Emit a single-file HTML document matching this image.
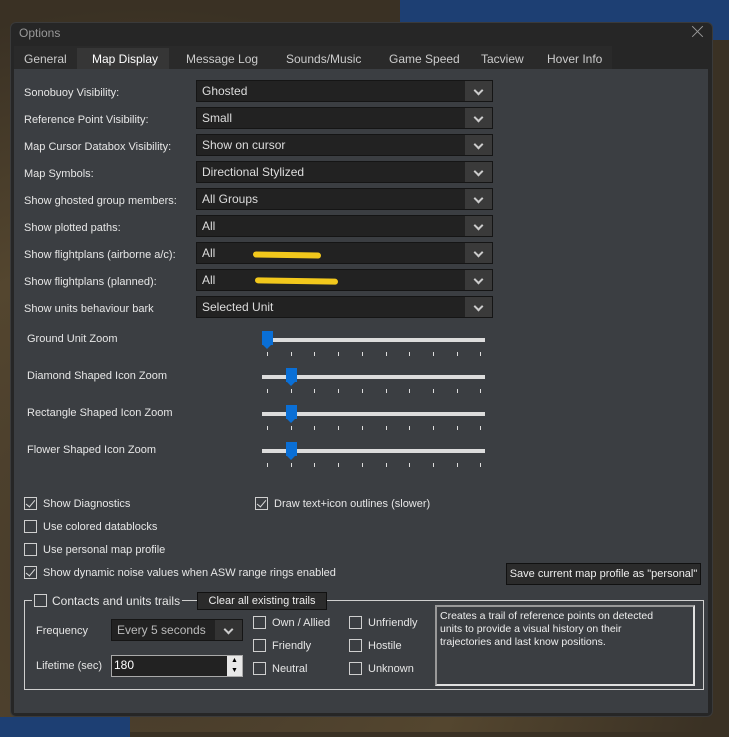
<!DOCTYPE html>
<html><head><style>
*{box-sizing:border-box;margin:0;padding:0}
body{width:729px;height:732px;position:relative;overflow:hidden;font-family:"Liberation Sans",sans-serif;font-size:11px;color:#e6e6e6;
background:radial-gradient(ellipse at 20% 80%,#44392a,#54462f 40%,#3a3124 70%);}
.a{position:absolute;white-space:nowrap}
.sea{position:absolute;left:400px;top:0;width:340px;height:40px;background:#1d3f73}
.sea2{position:absolute;left:0;top:717px;width:130px;height:20px;background:#1d3f73}
.win{position:absolute;left:10px;top:22px;width:703px;height:695px;background:#262626;border-radius:6px;border:1px solid #3a3a3a}
.panel{position:absolute;left:14px;top:69px;width:694px;height:644px;background:#3b3e42}
.dd{position:absolute;left:196px;width:297px;height:22px;background:#222;border:1px solid #151515}
.dd span{position:absolute;left:5px;top:3px;font-size:12px;color:#ddd}
.dd i{position:absolute;right:0;top:0;width:27px;height:20px;background:#3a3a3a}
.dd i:after{content:"";position:absolute;left:10px;top:6px;width:5px;height:5px;border-right:2px solid #ccc;border-bottom:2px solid #ccc;transform:rotate(45deg)}
.lb{position:absolute;left:24px;font-size:11px;color:#e6e6e6;margin-top:2px}
.tr{position:absolute;left:262px;width:223px;height:4px;background:#dcdcdc}
.th{position:absolute;width:11px;height:14px;background:#0a6fd6}
.th:after{content:"";position:absolute;left:0;top:13px;border-left:5.5px solid transparent;border-right:5.5px solid transparent;border-top:5px solid #0a6fd6}
.tk{position:absolute;width:1px;height:4px;background:#ddd}
.cb{position:absolute;width:13px;height:13px;border:1px solid #cfcfcf}
.cb.c:after{content:"";position:absolute;left:3px;top:0px;width:4px;height:8px;border-right:1.5px solid #ddd;border-bottom:1.5px solid #ddd;transform:rotate(40deg)}
.tab{position:absolute;top:52px;font-size:12px;color:#ccc}
.btn{position:absolute;background:#2b2b2b;border:1px solid #111;color:#eee;font-size:11px;text-align:center}
.x{position:absolute;left:690px;top:31px;width:15px;height:1px;background:#999}
</style></head><body>
<div class="sea"></div><div class="sea2"></div>
<div class="win"></div>
<div class="a" style="left:19px;top:26px;font-size:12px;color:#999">Options</div>
<div class="x" style="transform:rotate(45deg)"></div><div class="x" style="transform:rotate(-45deg)"></div>
<div class="a" style="left:14px;top:46px;width:598px;height:23px;background:#2a2a2a"></div>
<div class="a" style="left:77px;top:48px;width:92px;height:21px;background:#363636"></div>
<div class="tab" style="left:24px">General</div>
<div class="tab" style="left:92px;color:#fff">Map Display</div>
<div class="tab" style="left:186px">Message Log</div>
<div class="tab" style="left:286px">Sounds/Music</div>
<div class="tab" style="left:389px">Game Speed</div>
<div class="tab" style="left:481px">Tacview</div>
<div class="tab" style="left:547px">Hover Info</div>
<div class="panel"></div>

<div class="lb" style="top:85px">Sonobuoy Visibility:</div><div class="dd" style="top:80px"><span>Ghosted</span><i></i></div>
<div class="lb" style="top:112px">Reference Point Visibility:</div><div class="dd" style="top:107px"><span>Small</span><i></i></div>
<div class="lb" style="top:139px">Map Cursor Databox Visibility:</div><div class="dd" style="top:134px"><span>Show on cursor</span><i></i></div>
<div class="lb" style="top:166px">Map Symbols:</div><div class="dd" style="top:161px"><span>Directional Stylized</span><i></i></div>
<div class="lb" style="top:193px">Show ghosted group members:</div><div class="dd" style="top:188px"><span>All Groups</span><i></i></div>
<div class="lb" style="top:220px">Show plotted paths:</div><div class="dd" style="top:215px"><span>All</span><i></i></div>
<div class="lb" style="top:247px">Show flightplans (airborne a/c):</div><div class="dd" style="top:242px"><span>All</span><i></i></div>
<div class="lb" style="top:274px">Show flightplans (planned):</div><div class="dd" style="top:269px"><span>All</span><i></i></div>
<div class="lb" style="top:301px">Show units behaviour bark</div><div class="dd" style="top:296px"><span>Selected Unit</span><i></i></div>
<div class="a" style="left:253px;top:252px;width:68px;height:6px;background:#f2c81c;border-radius:3px;transform:rotate(1deg)"></div>
<div class="a" style="left:255px;top:278px;width:83px;height:6px;background:#f2c81c;border-radius:3px;transform:rotate(1deg)"></div>

<div class="lb" style="left:27px;top:331px">Ground Unit Zoom</div>
<div class="lb" style="left:27px;top:368px">Diamond Shaped Icon Zoom</div>
<div class="lb" style="left:27px;top:405px">Rectangle Shaped Icon Zoom</div>
<div class="lb" style="left:27px;top:442px">Flower Shaped Icon Zoom</div>
<div class="tr" style="top:338px"></div><div class="th" style="left:262px;top:331px"></div>
<div class="tr" style="top:375px"></div><div class="th" style="left:286px;top:368px"></div>
<div class="tr" style="top:412px"></div><div class="th" style="left:286px;top:405px"></div>
<div class="tr" style="top:449px"></div><div class="th" style="left:286px;top:442px"></div>
<div id="ticks"></div>
<script>
var h='';[352,389,426,463].forEach(function(y){for(var i=0;i<10;i++){h+='<div class="tk" style="left:'+Math.round(267+i*23.7)+'px;top:'+y+'px"></div>'}});document.getElementById('ticks').innerHTML=h;
</script>

<div class="cb c" style="left:24px;top:497px"></div><div class="lb" style="left:43px;top:496px">Show Diagnostics</div>
<div class="cb c" style="left:255px;top:497px"></div><div class="lb" style="left:274px;top:496px">Draw text+icon outlines (slower)</div>
<div class="cb" style="left:24px;top:520px"></div><div class="lb" style="left:43px;top:519px">Use colored datablocks</div>
<div class="cb" style="left:24px;top:543px"></div><div class="lb" style="left:43px;top:542px">Use personal map profile</div>
<div class="cb c" style="left:24px;top:566px"></div><div class="lb" style="left:43px;top:565px">Show dynamic noise values when ASW range rings enabled</div>
<div class="btn" style="left:506px;top:563px;width:195px;height:22px;line-height:20px">Save current map profile as "personal"</div>

<div class="a" style="left:24px;top:600px;width:680px;height:90px;border:1px solid #cfcfcf"></div>
<div class="a" style="left:32px;top:592px;width:160px;height:16px;background:#3b3e42"></div>
<div class="a" style="left:182px;top:600px;width:10px;height:1px;background:#cfcfcf"></div>
<div class="cb" style="left:34px;top:594px"></div><div class="lb" style="left:52px;top:592px;font-size:12px">Contacts and units trails</div>
<div class="btn" style="left:197px;top:592px;width:130px;height:18px;line-height:16px">Clear all existing trails</div>
<div class="lb" style="left:36px;top:623px">Frequency</div>
<div class="dd" style="left:111px;top:619px;width:132px"><span style="color:#bbb">Every 5 seconds</span><i style="background:#333"></i></div>
<div class="lb" style="left:36px;top:658px">Lifetime (sec)</div>
<div class="a" style="left:111px;top:655px;width:132px;height:22px;background:#222;border:1px solid #aaa"></div>
<div class="a" style="left:114px;top:658px;font-size:12px;color:#fff">180</div>
<div class="a" style="left:227px;top:656px;width:15px;height:20px;background:#e8e8e8;font-size:7px;color:#000;text-align:center;line-height:10px">▲<br>▼</div>
<div class="cb" style="left:253px;top:616px"></div><div class="lb" style="left:272px;top:615px">Own / Allied</div>
<div class="cb" style="left:253px;top:639px"></div><div class="lb" style="left:272px;top:638px">Friendly</div>
<div class="cb" style="left:253px;top:662px"></div><div class="lb" style="left:272px;top:661px">Neutral</div>
<div class="cb" style="left:349px;top:616px"></div><div class="lb" style="left:368px;top:615px">Unfriendly</div>
<div class="cb" style="left:349px;top:639px"></div><div class="lb" style="left:368px;top:638px">Hostile</div>
<div class="cb" style="left:349px;top:662px"></div><div class="lb" style="left:368px;top:661px">Unknown</div>
<div class="a" style="left:435px;top:605px;width:260px;height:81px;border:2px solid #e0e0e0;border-top-color:#999;border-left-color:#999;padding:3px 30px 2px 3px;white-space:normal;font-size:10.5px;line-height:13px;color:#eee">Creates a trail of reference points on detected units to provide a visual history on their trajectories and last know positions.</div>
</body></html>
